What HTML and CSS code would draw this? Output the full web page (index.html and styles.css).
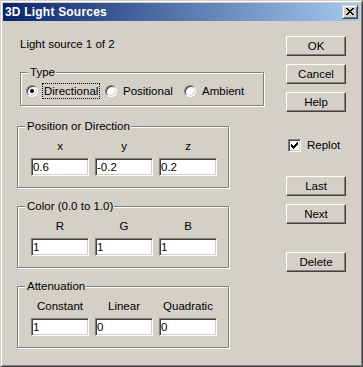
FILE: index.html
```html
<!DOCTYPE html>
<html lang="en">
<head>
    <meta charset="UTF-8">
    <title>3D Light Sources</title>
    <link rel="stylesheet" href="styles.css">
</head>
<body>
    <div class="window">
        <div class="titlebar">
            <span class="title">3D Light Sources</span>
            <span class="close">
                <svg width="8" height="7" viewBox="0 0 8 7"><path d="M0 0h2v1H0zM6 0h2v1H6zM1 1h2v1H1zM5 1h2v1H5zM2 2h4v1H2zM3 3h2v1H3zM2 4h4v1H2zM1 5h2v1H1zM5 5h2v1H5zM0 6h2v1H0zM6 6h2v1H6z" fill="#000"/></svg>
            </span>
        </div>

        <div class="client">
            <div class="main">
                <p class="info">Light source 1 of 2</p>

                <!-- 光源类型 -->
                <fieldset class="group type">
                    <legend>Type</legend>
                    <div class="radios">
                        <div class="option"><span class="radio checked"></span><span class="label focus">Directional</span></div>
                        <div class="option"><span class="radio"></span><span class="label">Positional</span></div>
                        <div class="option"><span class="radio"></span><span class="label">Ambient</span></div>
                    </div>
                </fieldset>

                <fieldset class="group pos">
                    <legend>Position or Direction</legend>
                    <div class="fields">
                        <span class="cap">x</span><span class="cap">y</span><span class="cap">z</span>
                        <span class="edit">0.6</span><span class="edit">-0.2</span><span class="edit">0.2</span>
                    </div>
                </fieldset>

                <fieldset class="group">
                    <legend>Color (0.0 to 1.0)</legend>
                    <div class="fields">
                        <span class="cap">R</span><span class="cap">G</span><span class="cap">B</span>
                        <span class="edit">1</span><span class="edit">1</span><span class="edit">1</span>
                    </div>
                </fieldset>

                <fieldset class="group">
                    <legend>Attenuation</legend>
                    <div class="fields">
                        <span class="cap">Constant</span><span class="cap">Linear</span><span class="cap">Quadratic</span>
                        <span class="edit">1</span><span class="edit">0</span><span class="edit">0</span>
                    </div>
                </fieldset>
            </div>

            <!-- 右侧按钮 -->
            <div class="side">
                <div class="btn ok">OK</div>
                <div class="btn">Cancel</div>
                <div class="btn">Help</div>
                <div class="check">
                    <span class="box">
                        <svg width="11" height="11" viewBox="0 0 11 11"><path d="M2.5 4v3M3.5 5v3M4.5 6v3M5.5 5v3M6.5 4v3M7.5 3v3M8.5 2v3" stroke="#000" stroke-width="1" fill="none"/></svg>
                    </span>
                    <span>Replot</span>
                </div>
                <div class="btn last">Last</div>
                <div class="btn">Next</div>
                <div class="btn delete">Delete</div>
            </div>
        </div>
    </div>
</body>
</html>
```

FILE: styles.css
```css
/*初始化*/
*{
    box-sizing: border-box;
}
body{
    margin: 0;
    background: #d4d0c8;
    font-family: "Liberation Sans", Arial, sans-serif;
    font-size: 11.5px;
    color: #000;
}

/*1.窗口外框*/
.window{
    width: 363px;
    height: 367px;
    padding: 2px;
    background: #d4d0c8;
    border: 1px solid;
    border-color: #d4d0c8 #404040 #404040 #d4d0c8;
    box-shadow: inset 1px 1px #fff, inset -1px -1px #808080;
}

/*2.标题栏*/
.titlebar{
    height: 18px;
    display: flex;
    align-items: flex-start;
    background: linear-gradient(to right, #0a246a, #a6caf0);
}
.title{
    flex: 1;
    padding-left: 2px;
    line-height: 18px;
    font-size: 12px;
    font-weight: bold;
    color: #fff;
    letter-spacing: 0.2px;
}
.close{
    width: 16px;
    height: 14px;
    margin: 2px 2px 0 0;
    padding: 2px 0 0 3px;
    background: #d4d0c8;
    border: 1px solid;
    border-color: #d4d0c8 #404040 #404040 #d4d0c8;
    box-shadow: inset 1px 1px #fff, inset -1px -1px #808080;
}
.close svg{
    display: block;
}

/*3.内容区*/
.client{
    display: flex;
}
.main{
    width: 283px;
}
.info{
    margin: 16px 0 0 17px;
    line-height: 14px;
}

/*4.分组框*/
.group{
    width: 212px;
    min-inline-size: 0;
    margin: 11px 0 0 14px;
    padding: 0;
    border: 1px solid #808080;
    box-shadow: inset 1px 1px #fff, 1px 1px #fff;
}
.group legend{
    margin-left: 7px;
    padding: 0 1px 0 2px;
    line-height: 14px;
    background: #d4d0c8;
}
.type{
    width: 244px;
    margin: 14px 0 0 17px;
}
.pos{
    margin-top: 13px;
}

/*5.单选按钮*/
.radios{
    display: flex;
    padding: 4px 0 6px 5px;
}
.option{
    width: 80px;
    height: 16px;
    display: flex;
    align-items: center;
}
.radio{
    width: 12px;
    height: 12px;
    margin-right: 4px;
    border-radius: 50%;
    background: #fff;
    border: 1px solid;
    border-color: #808080 #fff #fff #808080;
    box-shadow: inset 1px 1px #404040, inset -1px -1px #d4d0c8;
    display: flex;
    align-items: center;
    justify-content: center;
}
.radio.checked::after{
    content: "";
    width: 4px;
    height: 4px;
    border-radius: 50%;
    background: #000;
}
.label{
    padding: 0 1px;
    line-height: 14px;
    border: 1px dotted transparent;
    white-space: nowrap;
}
.label.focus{
    border-color: #000;
}

/*6.输入框*/
.fields{
    display: grid;
    grid-template-columns: repeat(3, 58px);
    column-gap: 6px;
    row-gap: 5px;
    padding: 6px 0 11px 13px;
}
.cap{
    text-align: center;
    line-height: 14px;
}
.edit{
    height: 18px;
    padding: 1px 1px;
    line-height: 14px;
    background: #fff;
    border: 1px solid;
    border-color: #808080 #fff #fff #808080;
    box-shadow: inset 1px 1px #404040, inset -1px -1px #d4d0c8;
}

/*7.右侧按钮*/
.side{
    width: 60px;
    display: flex;
    flex-direction: column;
}
.btn{
    height: 20px;
    margin-top: 8px;
    line-height: 14px;
    display: flex;
    align-items: center;
    justify-content: center;
    border: 1px solid;
    border-color: #fff #404040 #404040 #fff;
    box-shadow: inset -1px -1px #808080;
}
.ok{
    margin-top: 15px;
}
.last{
    margin-top: 24px;
}
.delete{
    margin-top: 28px;
}

/*8.复选框*/
.check{
    height: 14px;
    margin: 26px 0 0 2px;
    display: flex;
    align-items: center;
    white-space: nowrap;
}
.box{
    width: 13px;
    height: 13px;
    margin-right: 6px;
    background: #fff;
    border: 1px solid;
    border-color: #808080 #fff #fff #808080;
    box-shadow: inset 1px 1px #404040, inset -1px -1px #d4d0c8;
}
.box svg{
    display: block;
}
```
